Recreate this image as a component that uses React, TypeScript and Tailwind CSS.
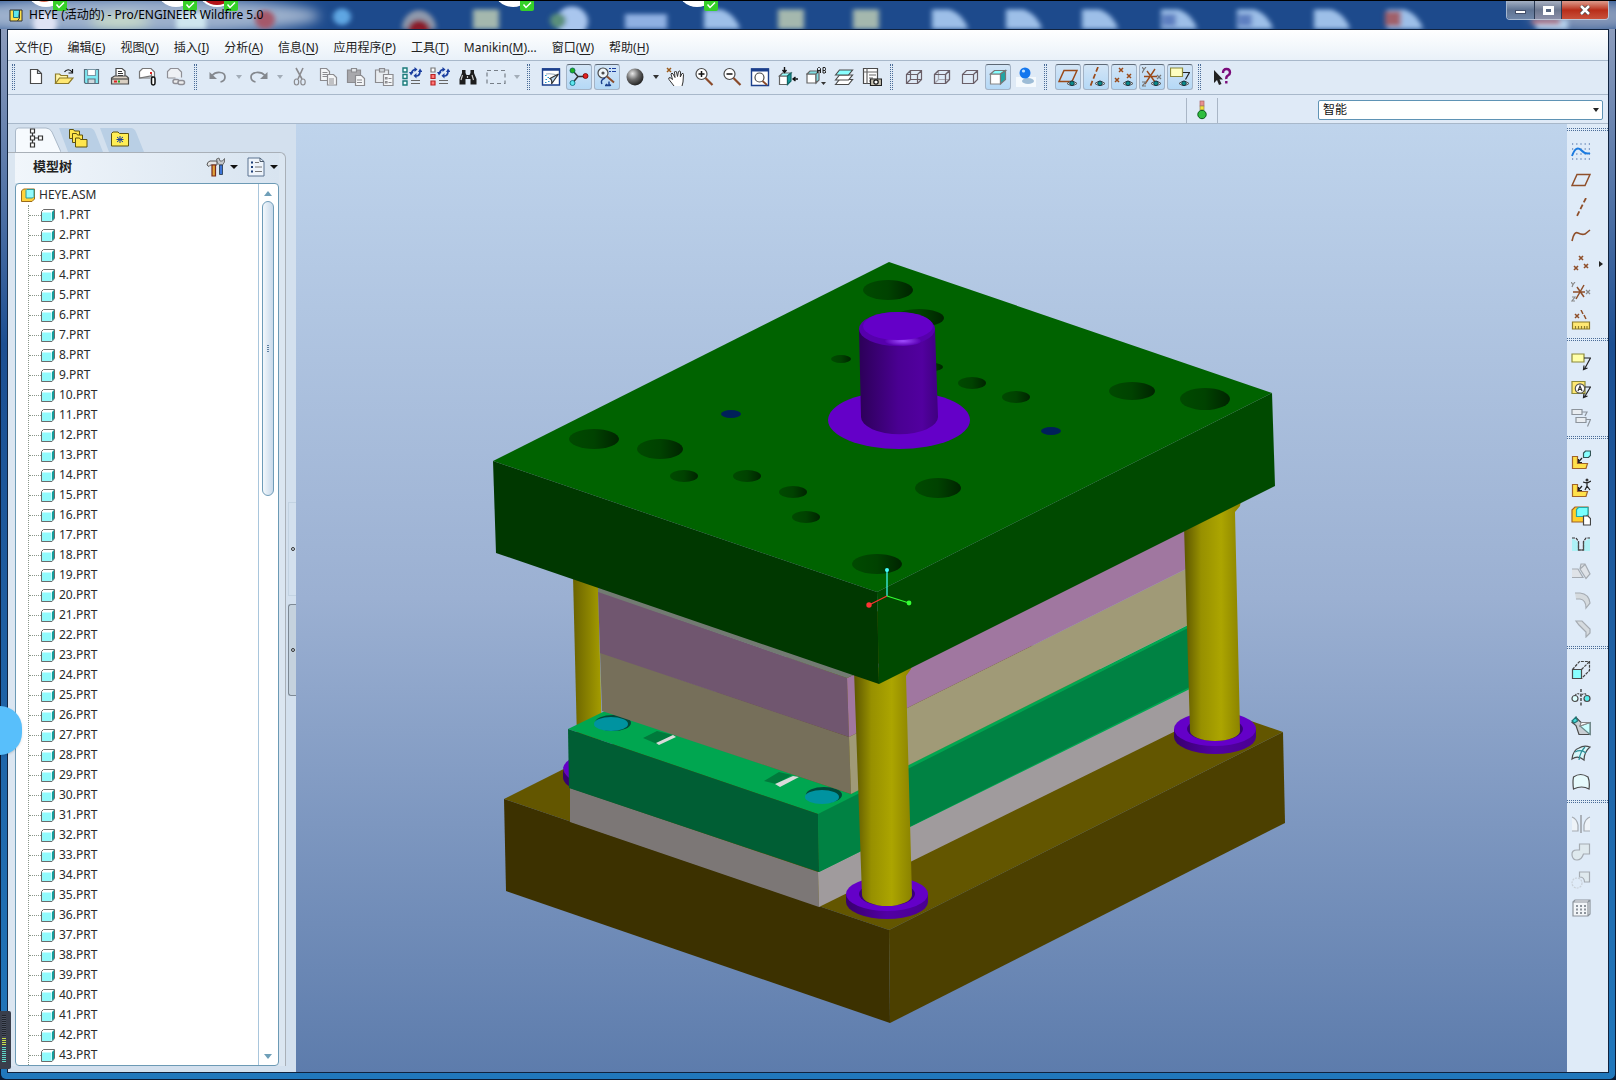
import type { ReactNode } from "react";

interface ToolItem {
  name: string;
  icon?: ReactNode;
  pressed?: boolean;
  disabled?: boolean;
  kind?: "grip" | "arrow";
}

interface MenuEntry {
  label: string;
  hotkey: string;
  tail?: string;
}

const menus: MenuEntry[] = [
  { label: "文件", hotkey: "F" },
  { label: "编辑", hotkey: "E" },
  { label: "视图", hotkey: "V" },
  { label: "插入", hotkey: "I" },
  { label: "分析", hotkey: "A" },
  { label: "信息", hotkey: "N" },
  { label: "应用程序", hotkey: "P" },
  { label: "工具", hotkey: "T" },
  { label: "Manikin", hotkey: "M", tail: "..." },
  { label: "窗口", hotkey: "W" },
  { label: "帮助", hotkey: "H" },
];

const parts = Array.from({ length: 43 }, (_, i) => `${i + 1}.PRT`);

function Icon({ children }: { children: ReactNode }) {
  return (
    <svg viewBox="0 0 20 20" className="size-5 shrink-0" fill="none" stroke="#4a4a4a" strokeWidth="1.2" aria-hidden="true">
      {children}
    </svg>
  );
}

// Small eye that marks the datum display toggles
const eye = (
  <g>
    <path d="M9 16.500q5-4.500 10 0q-5 4-10 0z" fill="#dbe7ee" stroke="#555" strokeWidth="1" />
    <circle cx="14" cy="16.300" r="2.300" fill="#0b8a8a" stroke="#123" strokeWidth="0.8" />
  </g>
);

const leader = <path d="M13 6h6.500l-6 11M13 13.500l-.5 4 4-1.500" stroke="#222" />;

const asmL = <path d="M1.500 6.500h5v7h10l-1.500 5H1.500z" fill="#ffe14a" stroke="#a0632a" />;

const cubeWire = "M2.500 7.500h11v9h-11z M6.500 3.500h11v9h-11z M2.500 7.500l4-4M13.500 7.500l4-4M13.500 16.500l4-4M2.500 16.500l4-4";

const toolbar: ToolItem[] = [
  { name: "g1", kind: "grip" },
  { name: "新建", icon: <Icon><path d="M4.500 2.500h7l4 4v10h-11z M11.500 2.500v4h4" fill="#fff" /></Icon> },
  {
    name: "打开",
    icon: (
      <Icon>
        <path d="M1.500 16.500v-9.500h4l1.500 1.500h6.500v3" fill="#fff6a8" stroke="#8c7a2a" />
        <path d="M1.500 16.500l4-5.500h13.500l-4.500 5.500z" fill="#ffe873" stroke="#8c7a2a" />
        <path d="M10.500 5c2-3 5.500-3 7.500 0M18.500 2v4h-4" stroke="#111" />
      </Icon>
    ),
  },
  {
    name: "保存",
    icon: (
      <Icon>
        <path d="M2.500 2.500h14v14h-13l-1-1z" fill="#7fe9f3" stroke="#5a6e7c" />
        <path d="M5.500 2.500h8v6h-8z" fill="#fff" stroke="#7a98a6" />
        <path d="M6 12h7v4.500H6z" fill="#cfd8dd" stroke="#5a6e7c" />
      </Icon>
    ),
  },
  {
    name: "打印",
    icon: (
      <Icon>
        <path d="M6 10V1.500h6l3 2.500v6" fill="#fff" />
        <path d="M8 4.500h4M8 6.500h5M8 8.500h5" stroke="#333" />
        <path d="M1.500 11l3-2h12l2 2v6h-17z" fill="#d9cfc2" />
        <path d="M1.500 12h17" />
        <path d="M4 14.500h3" stroke="#d22" strokeWidth="2" />
        <path d="M8 14.500h2" stroke="#2a2" strokeWidth="2" />
      </Icon>
    ),
  },
  {
    name: "发送",
    icon: (
      <Icon>
        <path d="M1.500 11V4.500l3-3h8.500l3.500 3.500v6l-3.500-2z" fill="#fff" stroke="#777" />
        <path d="M1.500 11h11M13.500 11V7" stroke="#777" />
        <rect x="13.500" y="10" width="3.500" height="8" rx="1.700" fill="#fff" stroke="#111" strokeWidth="1.500" />
        <path d="M12 6h2" stroke="#d22" strokeWidth="2" />
      </Icon>
    ),
  },
  {
    name: "链接",
    icon: (
      <Icon>
        <g stroke="#8f8f96">
          <path d="M1.500 11V4.500l3-3h7.500l3.500 3.500v5.500M1.500 11h8" fill="#eef1f5" />
          <rect x="7" y="12.500" width="6" height="4" rx="2" fill="#eee" strokeWidth="1.500" />
          <rect x="12" y="13.500" width="6.500" height="4" rx="2" fill="#eee" strokeWidth="1.500" />
        </g>
      </Icon>
    ),
  },
  { name: "g2", kind: "grip" },
  { name: "撤消", icon: <Icon><path d="M4 8.500C8 4 17 4.500 17 10c0 3-2 4.500-4.500 5" stroke="#84888e" strokeWidth="1.700" /><path d="M1.500 5v7H9z" fill="#84888e" stroke="none" /></Icon> },
  { name: "撤消列表", kind: "arrow", disabled: true },
  { name: "重做", icon: <Icon><path d="M16 8.500C12 4 2 4.500 2 10c0 3 2 4.500 4.500 5" stroke="#84888e" strokeWidth="1.700" /><path d="M18.500 5v7H11z" fill="#84888e" stroke="none" /></Icon> },
  { name: "重做列表", kind: "arrow", disabled: true },
  { name: "剪切", icon: <Icon><path d="M6 1l6 11M13 1L8 12" stroke="#8b8b8f" strokeWidth="1.600" /><ellipse cx="6.500" cy="15" rx="2.200" ry="3" stroke="#8b8b8f" /><ellipse cx="13" cy="15" rx="2.200" ry="3" stroke="#8b8b8f" /></Icon> },
  { name: "复制", icon: <Icon><g stroke="#8b8b8f"><path d="M2.500 1.500h6l3 3v9h-9z" fill="#f4f6f8" /><path d="M4.500 5.500h5M4.500 7.500h5M4.500 9.500h5" /><path d="M9.500 7.500h6l3 3v7.500h-9z" fill="#f4f6f8" /><path d="M11 12h5M11 14h5M11 16h5" /></g></Icon> },
  { name: "粘贴", icon: <Icon><g stroke="#8b8b8f"><path d="M1.500 3h13v12.500h-13z" fill="#a8a8ac" /><path d="M5.500 1.500h5V5h-5z" fill="#e4e7ea" /><path d="M9.500 8.500h6l3 3v7h-9z" fill="#f4f6f8" /><path d="M11 13h5M11 15.500h5" /></g></Icon> },
  { name: "选择性粘贴", icon: <Icon><g stroke="#8b8b8f"><path d="M1.500 3h13v12.500h-13z" fill="#e8ecf0" /><path d="M5.500 1.500h5V5h-5z" fill="#cfd4d9" /><path d="M9.500 7.500h9.500v11H9.500z" fill="#f4f6f8" /><path d="M11.500 10.500h1.500v1.500h-1.500zM11.500 14.500h1.500v1.500h-1.500zM14.500 11.500h3M14.500 15.500h3" /></g></Icon> },
  {
    name: "再生",
    icon: (
      <Icon>
        <path d="M1 1h4v4H1zM1 7.500h4v4H1zM1 14h4v4H1z" fill="#eff" stroke="#1a7a7a" strokeWidth="1.400" />
        <path d="M9.500 6q1-3.500 4-3.500M18 4q0 5-4 5" stroke="#1b3fa0" strokeWidth="1.700" />
        <path d="M12.500 0v5l3-2.500zM14.500 6v5.500l-3-2.700zM7 5h4.500L9 8.500zM16 5h4.500L18 1.500z" fill="#1b3fa0" stroke="none" />
        <path d="M9 13.500h9M9 16.500h9" stroke="#666" />
      </Icon>
    ),
  },
  {
    name: "再生管理器",
    icon: (
      <Icon>
        <path d="M1 1h4v4H1z" fill="#fff" stroke="#777" />
        <path d="M1 7.500h4v4H1zM1 14h4v4H1z" fill="#f77" stroke="#b22" />
        <path d="M9.500 6q1-3.500 4-3.500M18 4q0 5-4 5" stroke="#1b3fa0" strokeWidth="1.700" />
        <path d="M12.500 0v5l3-2.500zM14.500 6v5.500l-3-2.700zM7 5h4.500L9 8.500zM16 5h4.500L18 1.500z" fill="#1b3fa0" stroke="none" />
        <path d="M9 13.500h9M9 16.500h9" stroke="#666" />
      </Icon>
    ),
  },
  {
    name: "查找",
    icon: (
      <Icon>
        <path d="M4 3h3.500v3l1 2h3l1-2V3H16v3l2.500 6v5.500h-6V12h-5v5.500h-6V12L4 6z" fill="#1d1d1d" stroke="none" />
        <path d="M4.500 8l-1.500 5M14 8l1.500 5M9.500 9v2" stroke="#c8c8c8" />
      </Icon>
    ),
  },
  { name: "选取框", icon: <Icon><path d="M1 3.500h18v13H1z" stroke="#777f88" strokeDasharray="4 3" /></Icon> },
  { name: "选取列表", kind: "arrow", disabled: true },
  { name: "g3", kind: "grip" },
  {
    name: "重画",
    icon: (
      <Icon>
        <path d="M1.500 2h17v16h-17z" fill="#fff" stroke="#1b3f8c" strokeWidth="1.400" />
        <path d="M1 2.500h18" stroke="#1b3f8c" strokeWidth="2.500" />
        <path d="M5 7q7-1 12 2" stroke="#9ab" />
        <path d="M17.500 7l-7 10q1-4-1.500-5.500z" fill="#bcd9f0" stroke="#333" />
        <path d="M4 8.500h1.500M6.500 10.500h1.500M4.500 12.500h1.500M7 14.500h1.500M4 15.500h1.500" stroke="#29c" />
      </Icon>
    ),
  },
  {
    name: "旋转中心",
    pressed: true,
    icon: (
      <Icon>
        <path d="M4 4l5 5.500-5 6M9 9.500h8" stroke="#333" strokeWidth="1.500" />
        <circle cx="3.500" cy="3.500" r="2.500" fill="#1fae1f" stroke="#065" strokeWidth=".8" />
        <circle cx="16.500" cy="9" r="2.500" fill="#e02020" stroke="#700" strokeWidth=".8" />
        <circle cx="3.500" cy="16" r="2.500" fill="#5fe6ee" stroke="#067" strokeWidth=".8" />
      </Icon>
    ),
  },
  {
    name: "定向模式",
    pressed: true,
    icon: (
      <Icon>
        <circle cx="6" cy="6" r="5" fill="#eef6fa" />
        <circle cx="6" cy="6" r="1" fill="#333" />
        <path d="M10 9.500l7 6" stroke="#8a4a2a" strokeWidth="2" />
        <path d="M12 1.500h2M15 1.500h4M12 4.500h2M15 4.500h4" stroke="#1b3fa0" />
        <path d="M8 11q-5 2-3 6M14 18q-3 1.500-5-1M12 14.500v4H8" stroke="#1b3f8c" strokeWidth="1.400" />
      </Icon>
    ),
  },
  { name: "外观库", icon: <Icon><circle cx="10" cy="10" r="8.500" fill="url(#ball)" stroke="none" /></Icon> },
  { name: "外观列表", kind: "arrow" },
  {
    name: "平移",
    icon: (
      <Icon>
        <path d="M1 1l4 4M5 1L1 5" stroke="#9a5a1a" strokeWidth="1.500" />
        <path d="M8 19L3 12.500q-1-2 1-2l2.500 2L5 7q1-2 2 0l2 3.500L8.500 5q1-2 2 0l1 4.500 1-5q1.500-1.500 2 .5l-.2 5 1.700-3.500q1.500-.5 1.500 1L17 15l-1 4" fill="#fff" stroke="#333" strokeWidth="1" />
      </Icon>
    ),
  },
  { name: "放大", icon: <Icon><circle cx="7.500" cy="7" r="5.500" fill="#fff" /><path d="M4.500 7h6M7.500 4v6" stroke="#111" strokeWidth="1.500" /><path d="M11.500 11l7 7" stroke="#8a4a2a" strokeWidth="2.200" /></Icon> },
  { name: "缩小", icon: <Icon><circle cx="7.500" cy="7" r="5.500" fill="#fff" /><path d="M4.500 7h6" stroke="#111" strokeWidth="1.500" /><path d="M11.500 11l7 7" stroke="#8a4a2a" strokeWidth="2.200" /></Icon> },
  {
    name: "重新调整",
    icon: (
      <Icon>
        <path d="M1.500 2h17v16.500h-17z" fill="#fff" stroke="#1b3f8c" strokeWidth="1.400" />
        <path d="M1 3h18" stroke="#1b3f8c" strokeWidth="3" />
        <circle cx="9.500" cy="10.500" r="4.500" />
        <path d="M12.500 14l4.500 4" stroke="#8a4a2a" strokeWidth="1.800" />
      </Icon>
    ),
  },
  {
    name: "视图方向",
    icon: (
      <Icon>
        <path d="M1.500 9h8v8.500h-8z" fill="#fff" stroke="#666" />
        <path d="M1.500 9l3-3h8.500l-3.500 3z" fill="#9ff" stroke="#666" />
        <path d="M9.500 9L13 6v8l-3.500 3.500z" fill="#159c9c" stroke="#166" />
        <path d="M6.500 0v5M4.500 3l2 2.500 2-2.500M20 12h-4.500M17.500 10L15 12l2.500 2" stroke="#111" strokeWidth="1.400" />
      </Icon>
    ),
  },
  {
    name: "命名视图",
    icon: (
      <Icon>
        <path d="M1 7h9v9H1z" fill="#fff" stroke="#666" />
        <path d="M1 7l3-3h9l-3 3zM10 7l3-3v9l-3 3z" fill="#7fdde2" stroke="#666" />
        <path d="M11.500 6V1.500l1-1h1l1 1V6M11.500 3.500h3M17 .5v5.500h2l1-1-1-1.500 1-1.500-1-1.500z M17 3.500h2" stroke="#222" strokeWidth="1" />
        <path d="M15 15h5l-2.500 3z" fill="#333" stroke="none" />
      </Icon>
    ),
  },
  {
    name: "层",
    icon: (
      <Icon>
        <path d="M1.500 17.500l4-5h13l-4 5z" fill="#fff" />
        <path d="M1.500 13l4-5h13l-4 5z" fill="#fff" />
        <path d="M1.500 8l4-5h13l-4 5z" fill="#8ff" />
      </Icon>
    ),
  },
  {
    name: "视图管理器",
    icon: (
      <Icon>
        <path d="M1.500 1.500h14v15h-14z" fill="#fff" />
        <path d="M1.500 5h14M5 1.500v15M7 8h7M7 11h4M7 14h3" stroke="#666" />
        <path d="M8.500 12h11v6.500h-11z" fill="#c9c4b4" stroke="#222" />
        <circle cx="14" cy="15" r="2.200" fill="#fff" stroke="#111" />
      </Icon>
    ),
  },
  { name: "g4", kind: "grip" },
  { name: "线框", icon: <Icon><path d={cubeWire} stroke="#6a5f68" /></Icon> },
  { name: "隐藏线", icon: <Icon><path d={cubeWire} stroke="#a9a9b2" /><path d="M2.500 7.500h11v9h-11zM2.500 7.500l4-4h11v9l-4 4M13.500 7.500l4-4" stroke="#6a5f68" /></Icon> },
  { name: "消隐", icon: <Icon><path d="M2.500 7.500h11v9h-11zM2.500 7.500l4-4h11v9l-4 4M13.500 7.500l4-4" stroke="#6a5f68" /></Icon> },
  {
    name: "着色",
    pressed: true,
    icon: (
      <Icon>
        <path d="M2.500 7h10v10h-10z" fill="#fff" stroke="#888" />
        <path d="M2.500 7l4-3.500h11l-5 3.500z" fill="#8ff" stroke="#777" />
        <path d="M12.500 7l5-3.500v9l-5 4.500z" fill="#1fa5a5" stroke="#777" />
      </Icon>
    ),
  },
  {
    name: "增强的真实感",
    icon: (
      <Icon>
        <path d="M0 10h20v10H0z" fill="#f4f9fd" stroke="none" />
        <ellipse cx="12" cy="14" rx="6" ry="3" fill="#9dbcd6" stroke="none" />
        <circle cx="9" cy="6" r="5.500" fill="#1477ee" stroke="none" />
        <circle cx="7.500" cy="4" r="1.600" fill="#bfe0ff" stroke="none" />
      </Icon>
    ),
  },
  { name: "g5", kind: "grip" },
  { name: "平面显示", pressed: true, icon: <Icon><path d="M1 14.500l5-11h13l-5 11z" stroke="#9a4a1a" strokeWidth="1.500" />{eye}</Icon> },
  { name: "轴显示", pressed: true, icon: <Icon><path d="M12 0L4 20" stroke="#9a4a1a" strokeWidth="1.700" strokeDasharray="5 2.500" />{eye}</Icon> },
  { name: "点显示", pressed: true, icon: <Icon><path d="M5 1l4 4M9 1L5 5M13 7l4 4M17 7l-4 4M1 11l4 4M5 11l-4 4" stroke="#9a4a1a" strokeWidth="1.500" />{eye}</Icon> },
  {
    name: "坐标系显示",
    pressed: true,
    icon: (
      <Icon>
        <path d="M13 2L3 17M2 9.500h13M5 4l8 11" stroke="#9a4a1a" strokeWidth="1.400" />
        <path d="M0 0l2 2.500L4 0M2 2.500L0 6M0 15h4l-4 4h4M15 8l4 4M19 8l-4 4" stroke="#777" />
        {eye}
      </Icon>
    ),
  },
  { name: "注释显示", pressed: true, icon: <Icon><path d="M.5 1h12v8.500H.5z" fill="#ffffc0" stroke="#8c8a3a" /><path d="M13 5.500h6.500l-4 7" stroke="#222" />{eye}</Icon> },
  { name: "g6", kind: "grip" },
  { name: "上下文帮助", icon: <Icon><path d="M2 3v13l3-3 2 5 2.500-1-2-4.500H11z" fill="#222" stroke="none" /><path d="M11 6q0-4 3.500-4T18 5.500q0 2-2 3t-1.700 3.500M14.300 14v2.500" stroke="#7a0b7a" strokeWidth="2.400" /></Icon> },
];

const brown = "#8f4f2a";

const sideTools: ToolItem[] = [
  { name: "s1", kind: "grip" },
  {
    name: "草绘",
    icon: (
      <Icon>
        <path d="M1 2h18M1 7h18M1 12h18M1 17h18" stroke="#345a9c" strokeDasharray="1.200 3" />
        <path d="M1 14Q5 3 10 8t9 3" stroke="#1b7be0" strokeWidth="1.900" />
      </Icon>
    ),
  },
  { name: "平面", icon: <Icon><path d="M1 15.500l5-11h13l-5 11z" stroke={brown} strokeWidth="1.500" /></Icon> },
  { name: "轴", icon: <Icon><path d="M15 0L5 20" stroke={brown} strokeWidth="1.800" strokeDasharray="5 2.500" /></Icon> },
  { name: "曲线", icon: <Icon><path d="M1 15Q3 5 7 7t7 1l5-4" stroke={brown} strokeWidth="1.600" /></Icon> },
  { name: "点", icon: <Icon><path d="M8 2l4 4M12 2L8 6M13 10l4 4M17 10l-4 4M3 12l4 4M7 12l-4 4" stroke={brown} strokeWidth="1.600" /></Icon> },
  {
    name: "坐标系",
    icon: (
      <Icon>
        <path d="M13 3L5 17M2 10h12M6 5l7 10" stroke={brown} strokeWidth="1.500" />
        <path d="M0 0l2 2.500L4 0M2 2.500L1 5M1 15h3l-3 4h3M15 8l4 4M19 8l-4 4" stroke="#888" />
      </Icon>
    ),
  },
  {
    name: "分析特征",
    icon: (
      <Icon>
        <path d="M4 4l4 4M8 4L4 8M10 0l2 4M13 5l2 4" stroke={brown} strokeWidth="1.500" />
        <path d="M1.500 12h17v7h-17z" fill="#ffe873" stroke="#8c7a2a" />
        <path d="M4.500 19v-3M7.500 19v-3M10.500 19v-3M13.500 19v-3M16 19v-3" stroke="#8c7a2a" />
      </Icon>
    ),
  },
  { name: "s2", kind: "grip" },
  { name: "注释", icon: <Icon><path d="M1 2h12v8H1z" fill="#ffffa8" stroke="#8c8a3a" />{leader}</Icon> },
  { name: "传播", icon: <Icon><path d="M1 1.500h13v12H1z" fill="#ffe873" stroke="#8c8a3a" /><circle cx="9" cy="8.500" r="4.700" fill="#fff" stroke="#555" /><path d="M7 11l2-5 2 5M7.500 9.500h3" stroke="#333" /><path d="M14 7h5.500l-6 10M13 13.500l-.5 4 4-1.500" stroke="#222" /></Icon> },
  { name: "注释组", disabled: true, icon: <Icon><g stroke="#8d949c"><path d="M1 1.500h10v5H1zM5 9.500h10v5H5z" fill="#e9edf1" /><path d="M11 4h5l-2 4M15 11.500h4.500l-3 7" /></g></Icon> },
  { name: "s3", kind: "grip" },
  {
    name: "装配",
    icon: (
      <Icon>
        {asmL}
        <path d="M12.500 7.500V3l2-2h5v4.500l-2 2z" fill="#8ff" stroke="#355" />
        <path d="M11 8l-3.500 4M7.500 9v3.500H11" stroke="#222" />
      </Icon>
    ),
  },
  {
    name: "人体模型",
    icon: (
      <Icon>
        {asmL}
        <circle cx="16" cy="2" r="1.500" fill="#333" stroke="none" />
        <path d="M12 4l4 1 4-2M16 4v4l-2 4M16 8l3 4M11 8l-3.500 4M7.500 9v3.500H11" stroke="#222" />
      </Icon>
    ),
  },
  {
    name: "创建",
    icon: (
      <Icon>
        <path d="M1 4l3-3h13V13l-3 3H1z" fill="#ffcf2a" stroke="#a0632a" />
        <path d="M5.500 3.500l2-2H17v7l-2 2H5.500z" fill="#7ff" stroke="#2aa" />
        <path d="M12.500 10h4.500l2.500 2.500v6.500h-7z" fill="#fff" stroke="#444" />
      </Icon>
    ),
  },
  { name: "孔", icon: <Icon><path d="M1 4l6 4v9H1zM19 4l-6 4v9h6z" fill="#aef1f6" stroke="none" /><path d="M1 4h4l2.500 3.500v8.500h5V7.500L15 4h4" stroke="#333" strokeDasharray="3 1" /><path d="M7.500 7.500v8.500h5V7.500" /></Icon> },
  { name: "壳", disabled: true, icon: <Icon><g stroke="#a5abb2"><path d="M1 7h6l5 8.500H1M10 2h4l5 10-4 4.500L9 7zM9 7l5-4.500" fill="#dfe3e8" /></g></Icon> },
  { name: "倒圆角", disabled: true, icon: <Icon><g stroke="#a5abb2"><path d="M4 3h5q9 1 10 10l-4 5q0-8-6-9H5" fill="#d5dade" /></g></Icon> },
  { name: "倒角", disabled: true, icon: <Icon><g stroke="#a5abb2"><path d="M5 3h6l8 8v4l-4 4v-5L8 7z" fill="#d5dade" /></g></Icon> },
  { name: "s4", kind: "grip" },
  { name: "拉伸", icon: <Icon><path d="M1.500 9.500h9v9h-9z" fill="#8ff" /><path d="M1.500 9.500l7-8h10v9l-8 8M10.500 9.500l8-8" stroke="#444" strokeDasharray="3 1" /></Icon> },
  { name: "旋转", icon: <Icon><circle cx="4" cy="10.500" r="3" fill="#dff" /><circle cx="16" cy="10.500" r="3" fill="#5ee" /><path d="M10 1v18" stroke="#222" strokeDasharray="3 1.500" /><path d="M4 7.500q3-4 6 .5q3-4.500 6-.5" strokeDasharray="2 1" /></Icon> },
  { name: "扫描", icon: <Icon><path d="M5 1.500l5 5h9v12h-11l-3-9-4-3z" fill="#c9ced3" /><path d="M9 10l10-3.500v12z" fill="#cff" stroke="#688" /><path d="M10 6.500h9L9 10z" fill="#fff" stroke="#888" /><path d="M1 5l4-4 1.500 4-3 2z" fill="#4dd" stroke="#277" /></Icon> },
  { name: "边界混合", icon: <Icon><path d="M1 15q1-9 7-11q5-3 11-1-6 5-6 13-6-5-12-1z" fill="#d9f7fa" /><path d="M4 8q6-3 11 1M8 16q1-8 6-13" stroke="#2a8f98" /></Icon> },
  { name: "造型", icon: <Icon><path d="M2.500 17q-1-7 0-12 7-5 14.500 0 2 5 1 12-7-4-15.500 0z" fill="#e6fafc" /></Icon> },
  { name: "s5", kind: "grip" },
  { name: "镜像", disabled: true, icon: <Icon><g stroke="#a5abb2"><path d="M10 1v18" strokeWidth="1.800" /><path d="M1 3q5 2 6 8v6H1M19 3q-5 2-6 8v6h6" fill="#eef3f8" /></g></Icon> },
  { name: "合并", disabled: true, icon: <Icon><g stroke="#a5abb2"><path d="M8.500 2h10v10h-6q-2 6-6.500 6T1 13t5-5h2.500z" fill="#dfe9ee" /></g></Icon> },
  { name: "修剪", disabled: true, icon: <Icon><g stroke="#a5abb2"><path d="M8.500 2h10v10h-5q0-5-5-5z" fill="#dfe9ee" /><circle cx="6" cy="13" r="5" stroke="#c9d0d8" strokeDasharray="2 1" /></g></Icon> },
  { name: "阵列", disabled: true, icon: <Icon><g stroke="#8d949c"><path d="M2 4l2-2h15v14l-2 2H2zM2 4h15v14M17 4l2-2" fill="#f2f5f8" /><path d="M5 8h10M5 11.500h10M5 15h10" strokeDasharray="2 2" strokeWidth="1.800" /></g></Icon> },
];

function Grip({ vertical }: { vertical?: boolean }) {
  if (vertical) {
    return (
      <div className="h-[14px] w-full pt-1">
        <div className="h-[3px] border-y border-dotted border-[#4a6c98]" />
      </div>
    );
  }
  return (
    <div className="h-[26px] w-[14px] shrink-0 pl-1">
      <div className="h-full w-[3px] border-x border-dotted border-[#4a6c98]" />
    </div>
  );
}

function Toolbar() {
  return (
    <div className="flex h-[34px] items-center border-b border-[#a8b8ca] bg-[#dfeaf6] pb-0.5">
      {toolbar.map((item) => {
        if (item.kind === "grip") return <Grip key={item.name} />;
        if (item.kind === "arrow") {
          return (
            <button key={item.name} aria-label={item.name} className="flex h-[26px] w-[13px] items-center justify-center">
              <span className={`border-x-[3px] border-t-4 border-x-transparent ${item.disabled ? "border-t-[#a3adb8]" : "border-t-[#333]"}`} />
            </button>
          );
        }
        return (
          <button
            key={item.name}
            aria-label={item.name}
            className={`mx-px flex h-[26px] w-[26px] shrink-0 items-center justify-center rounded-[3px] border ${
              item.pressed ? "border-[#a3b3c6] border-t-[#5d6875] bg-linear-to-b from-[#d3e5f6] to-[#b4d8f6]" : "border-transparent"
            }`}
          >
            {item.icon}
          </button>
        );
      })}
    </div>
  );
}

function Tick({ className }: { className: string }) {
  return (
    <svg viewBox="0 0 14 10" className={`absolute top-0 h-[10px] w-[14px] ${className}`} aria-hidden="true">
      <path d="M0 0h14v8q0 2-2 2H2q-2 0-2-2z" fill="#35d028" />
      <path d="M3.500 3.500L6 6.500l5-5" fill="none" stroke="#fff" strokeWidth="1.500" />
    </svg>
  );
}

// Desktop icons showing through the glass title bar
function GlassBackdrop() {
  const docs = [707, 935, 1009, 1085, 1164, 1240, 1317, 1390];
  const sheets = [780, 855, 475];
  return (
    <svg viewBox="0 0 1616 30" preserveAspectRatio="none" className="absolute inset-0 h-full w-full" aria-hidden="true">
      <defs>
        <filter id="soft" x="-20%" y="-50%" width="140%" height="200%">
          <feGaussianBlur stdDeviation="2.500" />
        </filter>
        <filter id="softer" x="-20%" y="-100%" width="140%" height="300%">
          <feGaussianBlur stdDeviation="6" />
        </filter>
      </defs>
      <rect width="1616" height="30" fill="#1d4a8c" />
      <g filter="url(#softer)">
        <ellipse cx="130" cy="16" rx="190" ry="20" fill="#9cb0cc" />
        <ellipse cx="1590" cy="16" rx="60" ry="16" fill="#8497b8" />
        <ellipse cx="120" cy="22" rx="30" ry="8" fill="#c9dcc9" />
      </g>
      <g filter="url(#soft)">
        <circle cx="45" cy="24" r="12" fill="#dfe3f4" />
        <rect x="176" y="12" width="30" height="18" fill="#cfe6ef" />
        <circle cx="265" cy="20" r="10" fill="#a5596b" />
        <circle cx="342" cy="17" r="9" fill="#5fa6e2" />
        <path d="M402 30a17 20 0 0 1 34 0z" fill="#8e99ac" />
        <circle cx="419" cy="31" r="11" fill="#8a1f2b" />
        <circle cx="572" cy="22" r="16" fill="#a9c6ee" />
        <circle cx="558" cy="21" r="8" fill="#5a8f7c" />
        <rect x="625" y="14" width="42" height="16" fill="#8fb0e2" />
        {docs.map((x) => (
          <path key={x} d={`M${x - 3} 9h18q14 6 18 21h-36z`} fill="#9dbfe8" />
        ))}
        {sheets.map((x) => (
          <path key={x} d={`M${x - 2} 9h26v21h-26z`} fill="#a4b8ae" />
        ))}
        <rect x="1162" y="14" width="14" height="13" fill="#5d7fc0" />
        <rect x="1238" y="14" width="14" height="13" fill="#5d7fc0" />
        <rect x="1385" y="11" width="16" height="16" fill="#a0606a" />
        <path d="M1536 20h32v10h-32z" fill="#b4d0ec" />
        <path d="M1532 20h28v5h-28z" fill="#b07080" />
      </g>
    </svg>
  );
}

function TitleBar() {
  return (
    <header className="relative flex h-[29px] shrink-0 items-start justify-between overflow-hidden border-t border-black">
      <GlassBackdrop />
      <svg viewBox="0 0 1616 10" preserveAspectRatio="xMinYMin slice" className="absolute inset-x-0 top-0 h-[10px] w-full" aria-hidden="true">
        <circle cx="46" cy="-14" r="20" fill="#fff" />
        <circle cx="44" cy="-12" r="13" fill="#e06a50" />
        <circle cx="176" cy="-14" r="20" fill="#fff" />
        <circle cx="217" cy="-14" r="20" fill="#fff" />
        <circle cx="217" cy="-14" r="18" fill="#b21218" />
        <circle cx="513" cy="-14" r="20" fill="#fff" />
        <circle cx="697" cy="-14" r="20" fill="#fff" />
      </svg>
      <Tick className="left-[53px]" />
      <Tick className="left-[183px]" />
      <Tick className="left-[224px]" />
      <Tick className="left-[520px]" />
      <Tick className="left-[704px]" />
      <div className="relative flex h-7 items-center gap-1.5 pl-[9px]">
        <svg viewBox="0 0 14 14" className="size-3.5" aria-hidden="true">
          <path d="M1 2h12v11H1z" fill="#ffe14a" stroke="#333" />
          <path d="M4.500 2.500h6l-1 7h-5z" fill="#5fe6ee" stroke="#277" />
          <path d="M10.500 2v8l-2 3" fill="none" stroke="#333" />
        </svg>
        <h1 className="text-xs text-black">HEYE (活动的) - Pro/ENGINEER Wildfire 5.0</h1>
      </div>
      <div className="relative mr-[7px] flex h-[19px] overflow-hidden rounded-b-[4px] border border-t-0 border-[#c9d3e0]/80">
        <button aria-label="最小化" className="flex w-7 items-center justify-center border-r border-[#2b3b55] bg-linear-to-b from-[#a3b0c4] via-[#5f7392] to-[#6f86a8]">
          <span className="mt-1 h-1 w-[11px] border border-[#44506a] bg-white" />
        </button>
        <button aria-label="最大化" className="flex w-[27px] items-center justify-center border-r border-[#2b3b55] bg-linear-to-b from-[#a9b2c3] via-[#6d7890] to-[#8b8fa8]">
          <span className="h-[9px] w-[11px] border-[3px] border-white bg-[#56657f]" />
        </button>
        <button aria-label="关闭" className="flex w-[46px] items-center justify-center bg-linear-to-b from-[#dc9a8c] via-[#b82c18] to-[#c8503a]">
          <svg viewBox="0 0 12 10" className="h-[10px] w-3" aria-hidden="true">
            <path d="M2 1l8 8M10 1L2 9" stroke="#444" strokeWidth="4" />
            <path d="M2 1l8 8M10 1L2 9" stroke="#fff" strokeWidth="2.500" />
          </svg>
        </button>
      </div>
    </header>
  );
}

function MenuBar() {
  return (
    <nav className="flex h-[31px] items-center gap-[15px] border-b border-[#a8b8ca] bg-linear-to-b from-white to-[#e9f1f9] pl-[7px] pt-1.5">
      {menus.map((menu) => (
        <button key={menu.label} className="whitespace-nowrap text-xs text-[#222]">
          {menu.label}(<u className="underline-offset-2">{menu.hotkey}</u>){menu.tail}
        </button>
      ))}
    </nav>
  );
}

function FilterBar() {
  return (
    <div className="flex h-[29px] items-center justify-end border-b border-[#a8b8ca] bg-[#dfeaf7] pr-[5px] pt-0.5">
      <div className="mr-[100px] flex h-[25px] w-8 items-center justify-center border-x border-[#a9b6c6]">
        <svg viewBox="0 0 10 20" className="h-5 w-[10px]" aria-hidden="true">
          <rect x="3" y="1" width="4" height="5" fill="#e89090" stroke="#a66" strokeWidth=".7" />
          <rect x="3" y="6" width="4" height="4" fill="#f2e23a" stroke="#985" strokeWidth=".7" />
          <circle cx="5" cy="14.500" r="4.200" fill="#2fbe3f" stroke="#0b5a1b" />
        </svg>
      </div>
      <div className="relative">
        <select aria-label="选取过滤器" className="block h-5 w-[285px] appearance-none rounded-[2px] border border-[#5f93b5] bg-white pl-1 text-xs leading-4 text-[#111]">
          <option>智能</option>
        </select>
        <span className="pointer-events-none absolute right-1 top-2 border-x-[3px] border-t-4 border-x-transparent border-t-[#222]" />
      </div>
    </div>
  );
}

function PartIcon() {
  return (
    <svg viewBox="0 0 14 14" className="size-3.5 shrink-0" aria-hidden="true">
      <path d="M.5 3.500l2-2h11v9l-2.500 3H.5z" fill="#fff" stroke="#6b6b6b" />
      <path d="M1 4.500h9.500V13H1z" fill="#92fbfd" />
      <path d="M11 4l2-2v8.500L11 12.800z" fill="#149c9c" />
    </svg>
  );
}

const tabClass = "relative flex h-[25px] items-start justify-center pt-px";

function ModelTree() {
  return (
    <aside className="flex w-[280px] shrink-0 flex-col pb-1.5">
      <div className="flex items-end pl-[7px] pt-[3px]" role="tablist">
        <button role="tab" aria-selected="true" aria-label="模型树" className={`${tabClass} w-[42px]`}>
          <svg viewBox="0 0 46 25" className="absolute left-0 top-0 h-[25px] w-[46px]" aria-hidden="true">
            <path d="M.5 25V4q0-3 3-3H31q4 0 6 4l9 20" fill="#f6fafe" stroke="#aab9c9" />
          </svg>
          <svg viewBox="0 0 20 20" className="relative size-5" fill="#fff" stroke="#333" strokeWidth="1.200" aria-hidden="true">
            <path d="M4.500 1h4v4h-4zM4.500 8h4v4h-4zM12.500 8h4v4h-4zM4.500 15h4v4h-4zM6.500 5v3M6.500 12v3M8.500 10h4" />
          </svg>
        </button>
        <button role="tab" aria-selected="false" aria-label="文件夹浏览器" className={`${tabClass} w-[42px]`}>
          <svg viewBox="0 0 46 25" className="absolute left-0 top-0 h-[25px] w-[46px]" aria-hidden="true">
            <path d="M2 1h31q3 0 5 4l8 20H11z" fill="#b9cfe5" />
          </svg>
          <svg viewBox="0 0 20 20" className="relative size-5" fill="#ffe64d" stroke="#5e5310" aria-hidden="true">
            <path d="M1.500 1.500h4l1 1.500h5v7.500h-10z" />
            <path d="M4.500 5.500h4l1 1.500h5v7.500h-10z" />
            <path d="M7.500 10h4l1 1.500h6.500v7.500H7.500z" />
          </svg>
        </button>
        <button role="tab" aria-selected="false" aria-label="收藏夹" className={`${tabClass} w-[42px]`}>
          <svg viewBox="0 0 46 25" className="absolute left-0 top-0 h-[25px] w-[46px]" aria-hidden="true">
            <path d="M1 1h31q3 0 5 4l8 20H10z" fill="#b9cfe5" />
          </svg>
          <svg viewBox="0 0 20 20" className="relative size-5" aria-hidden="true">
            <path d="M1.500 18V5.500L3 4h5l1.500 1.500h9V18z" fill="#ffee55" stroke="#5e5310" />
            <path d="M10 8v7M7 9l6 5M13 9l-6 5M6.500 11.500h7" stroke="#1b3fa0" />
          </svg>
        </button>
      </div>
      <div className="mr-0.5 flex min-h-0 flex-1 flex-col rounded-tr-[6px] border-r border-t border-[#a9b0b8] bg-[#dbe6f1] pl-[7px] pr-1.5">
        <div className="flex h-[30px] shrink-0 items-center bg-linear-to-r from-[#f1f6fb] to-[#d8e4f0] pb-0.5 pl-[18px] pr-px">
          <h2 className="flex-1 text-[13px] font-bold text-[#222]">模型树</h2>
          <button aria-label="设置" className="flex items-center gap-1">
            <svg viewBox="0 0 20 20" className="size-5" aria-hidden="true">
              <path d="M1 8q0-3 3-4h7v4H4.500L3 9.500z" fill="#e4e4e4" stroke="#555" />
              <path d="M6 8h3.500v11H6z" fill="#e0a23a" stroke="#7a2a1a" strokeWidth="1.200" />
              <path d="M10.500 2l1 4 2 2h3l2-3V1.500l-2 2.500h-2.500L13 1z" fill="#c4c8cc" stroke="#555" strokeWidth=".8" />
              <path d="M13.500 8h3v9.500h-3z" fill="#3d74d8" stroke="#234" strokeWidth=".8" />
            </svg>
            <span className="border-x-4 border-t-4 border-x-transparent border-t-[#111]" />
          </button>
          <button aria-label="显示" className="ml-2 flex items-center gap-1">
            <svg viewBox="0 0 20 20" className="size-5" aria-hidden="true">
              <path d="M2 1h12l4 3.500V19H2z" fill="#eef4fb" stroke="#5a7390" />
              <path d="M14 1v3.500h4" fill="none" stroke="#4d5a6b" />
              <path d="M5 5.500h2M5 10h2M5 14.500h2" stroke="#1c3e78" strokeWidth="1.800" />
              <path d="M9 5.500h4M9 10h7M9 14.500h7" stroke="#777" />
            </svg>
            <span className="border-x-4 border-t-4 border-x-transparent border-t-[#111]" />
          </button>
        </div>
        <div className="flex min-h-0 flex-1 overflow-hidden rounded-[4px] border border-[#6c9ab5] bg-white">
          <div className="min-w-0 flex-1 pt-px text-xs text-[#2b2b2b]">
            <div className="flex h-5 items-center gap-1 pl-[5px]">
              <svg viewBox="0 0 14 14" className="size-3.5 shrink-0" aria-hidden="true">
                <path d="M.5 3l2-2h11v10l-2.500 2.500H.5z" fill="#ffd23a" stroke="#9a6a1a" />
                <path d="M5 2.500l1-1h7v7l-1.500 1.500H5z" fill="#92fbfd" stroke="#2a9a9a" />
              </svg>
              HEYE.ASM
            </div>
            <ul className="ml-3 border-l border-dotted border-[#8a968a]">
              {parts.map((part) => (
                <li key={part} className="flex h-5 items-center">
                  <span className="w-3 border-t border-dotted border-[#8a968a]" />
                  <PartIcon />
                  <span className="ml-1">{part}</span>
                </li>
              ))}
            </ul>
          </div>
          <div className="flex w-5 shrink-0 flex-col items-center justify-between border-l border-[#a9c6dc] pb-1.5 pr-px pt-[7px]">
            <span className="border-x-4 border-b-[5px] border-x-transparent border-b-[#6f9fb8]" />
            <div className="mb-auto mt-[5px] flex h-[295px] w-3 flex-col items-center justify-center gap-px rounded-full border border-[#6f9cb8] bg-linear-to-r from-[#f3f8fc] to-[#c8d9ea]">
              <span className="h-px w-0.5 bg-[#5d7fa0]" />
              <span className="h-px w-0.5 bg-[#5d7fa0]" />
              <span className="h-px w-0.5 bg-[#5d7fa0]" />
              <span className="h-px w-0.5 bg-[#5d7fa0]" />
            </div>
            <span className="border-x-4 border-t-[5px] border-x-transparent border-t-[#6f9fb8]" />
          </div>
        </div>
      </div>
    </aside>
  );
}

function Splitter() {
  return (
    <div className="flex w-2 shrink-0 flex-col items-end justify-center gap-2 pt-0.5">
      <button aria-label="折叠" className="flex h-[94px] w-2 items-center justify-center border border-r-0 border-[#c3d3e2]">
        <span className="size-1 rounded-full border border-[#333]" />
      </button>
      <button aria-label="展开" className="flex h-[92px] w-2 items-center justify-center rounded-l-[3px] border border-r-0 border-[#7d8995] bg-[#c5d2de]">
        <span className="size-1 rounded-full border border-[#333]" />
      </button>
    </div>
  );
}

const holes = [
  [888, 290, 25, 10],
  [919, 318, 25, 9],
  [841, 359, 10, 4],
  [933, 367, 10, 4],
  [972, 383, 14, 6],
  [1016, 397, 14, 6],
  [1132, 391, 23, 9],
  [1205, 399, 25, 11],
  [594, 439, 25, 10],
  [660, 449, 23, 10],
  [684, 476, 14, 6],
  [747, 476, 14, 6],
  [793, 492, 14, 6],
  [806, 517, 14, 6],
  [938, 488, 23, 10],
  [877, 564, 25, 10],
];

function Collar({ cx, cy }: { cx: number; cy: number }) {
  return (
    <g>
      <path d={`M${cx - 41} ${cy}v8a41 17 0 0 0 82 0v-8z`} fill="url(#collarSide)" />
      <ellipse cx={cx} cy={cy} rx="41" ry="17" fill="#6400c8" />
      <ellipse cx={cx} cy={cy} rx="28" ry="12" fill="#3a0078" />
    </g>
  );
}

function Viewport() {
  return (
    <main className="min-w-0 flex-1 bg-linear-to-b from-[#bfd4ec] via-[#9bb0d2] to-[#5d7cac]">
      <svg viewBox="296 124 1271 948" className="h-full w-full" role="img" aria-label="HEYE.ASM">
        <defs>
          <radialGradient id="ball" cx="0.35" cy="0.3" r="0.75">
            <stop offset="0" stopColor="#e8e8e8" />
            <stop offset="0.5" stopColor="#6a6a6a" />
            <stop offset="1" stopColor="#1c1c1c" />
          </radialGradient>
          <linearGradient id="hole">
            <stop offset="0" stopColor="#004a00" />
            <stop offset="0.5" stopColor="#004200" />
            <stop offset="1" stopColor="#002400" />
          </linearGradient>
          <linearGradient id="pillar">
            <stop offset="0" stopColor="#5c5600" />
            <stop offset="0.3" stopColor="#979000" />
            <stop offset="0.65" stopColor="#aca500" />
            <stop offset="1" stopColor="#8a8200" />
          </linearGradient>
          <linearGradient id="pillarBack">
            <stop offset="0" stopColor="#6a6300" />
            <stop offset="1" stopColor="#a69e00" />
          </linearGradient>
          <linearGradient id="sprue">
            <stop offset="0" stopColor="#2c0058" />
            <stop offset="0.5" stopColor="#4a0092" />
            <stop offset="0.8" stopColor="#52009f" />
            <stop offset="1" stopColor="#3f0080" />
          </linearGradient>
          <linearGradient id="collarSide">
            <stop offset="0" stopColor="#38006e" />
            <stop offset="0.5" stopColor="#5200a4" />
            <stop offset="1" stopColor="#4a0090" />
          </linearGradient>
          <radialGradient id="glint">
            <stop offset="0" stopColor="#a04cff" />
            <stop offset="1" stopColor="#5a00b4" />
          </radialGradient>
        </defs>

        {/* bottom clamp plate */}
        <path d="M504 799L900 600L1283 732L889 930z" fill="#635600" />
        <path d="M504 799L889 930L890 1023L506 891z" fill="#3c3100" />
        <path d="M889 930L1283 732L1285 823L890 1023z" fill="#4c4000" />
        <path d="M563 768a41 17 0 0 0 20 15v9a41 17 0 0 1-20-15z" fill="#38006e" />
        <path d="M563 768q2-8 14-12v26q-12-4-14-14z" fill="#6400c8" />

        {/* back guide pillar, seen left of the stack */}
        <path d="M573 576L598 584L602 740L577 740z" fill="url(#pillarBack)" />

        {/* spacer plate */}
        <path d="M570 788L818 872L819 907L570 822z" fill="#7c7776" />
        <path d="M818 872L1200 682L1200 719L819 907z" fill="#a09b9d" />

        {/* green core plate */}
        <path d="M568 729L605 711L851 794L858 790L1200 619L1200 684L819 872L818 814z" fill="#00a650" />
        <path d="M568 729L818 814L819 872L569 788z" fill="#005e34" />
        <path d="M818 814L1200 622L1200 682L819 872z" fill="#008243" />
        <ellipse cx="613" cy="723" rx="18" ry="8" fill="#004a3a" />
        <ellipse cx="611" cy="724" rx="17" ry="7" fill="#0093a0" />
        <ellipse cx="824" cy="795" rx="18" ry="8" fill="#004a3a" />
        <ellipse cx="822" cy="797" rx="17" ry="7" fill="#0093a0" />
        <path d="M643 738L657 731L673 735L657 744z" fill="#007a3c" />
        <path d="M656 743L673 735L676 737L659 745z" fill="#dadada" />
        <path d="M764 781L779 772L792 775L776 784z" fill="#007a3c" />
        <path d="M775 784L793 776L799 777L780 787z" fill="#dadada" />

        {/* cavity plates */}
        <path d="M600 652L849 737L851 794L602 711z" fill="#766f5a" />
        <path d="M849 737L1190 567L1190 624L851 794z" fill="#a09a77" />
        <path d="M598 591L847 678L849 737L600 653z" fill="#70566f" />
        <path d="M847 678L1190 520L1190 567L849 737z" fill="#a077a0" />
        <path d="M598 584L860 672L847 678L598 592z" fill="#727b72" />

        <Collar cx={1215} cy={729} />
        <path d="M1184 526L1241 500L1240 506L1235 512L1240 731a25 10 0 0 1-50 0z" fill="url(#pillar)" />
        <Collar cx={887} cy={894} />
        <path d="M854 670L912 664L911 669L906 676L912 895a25 11 0 0 1-50 0z" fill="url(#pillar)" />

        {/* top clamp plate */}
        <path d="M889 262L1272 393L877 592L493 461z" fill="#006300" />
        <path d="M493 461L877 592L879 684L496 553z" fill="#003800" />
        <path d="M877 592L1272 393L1275 486L879 684z" fill="#004a00" />
        {holes.map(([cx, cy, rx, ry]) => (
          <ellipse key={`${cx}-${cy}`} cx={cx} cy={cy} rx={rx} ry={ry} fill="url(#hole)" />
        ))}
        <ellipse cx="731" cy="414" rx="10" ry="4" fill="#00205a" />
        <ellipse cx="1051" cy="431" rx="10" ry="4" fill="#00205a" />

        {/* locating ring and sprue bushing */}
        <ellipse cx="899" cy="420" rx="71" ry="29" fill="#6400c8" />
        <path d="M859 329L861 417a38 17 0 0 0 77 0L935 329z" fill="url(#sprue)" />
        <ellipse cx="897" cy="329" rx="38" ry="17" fill="#5600ac" />
        <ellipse cx="903" cy="341" rx="18" ry="5" fill="url(#glint)" />
        <ellipse cx="898" cy="326" rx="35" ry="14" fill="#6400c8" />

        {/* spin centre */}
        <path d="M887 596V570" stroke="#4ff" strokeWidth="1.200" />
        <path d="M887 596L869 605" stroke="#f33" strokeWidth="1.200" />
        <path d="M887 596L909 603" stroke="#3f3" strokeWidth="1.200" />
        <circle cx="887" cy="570" r="2" fill="#4ff" />
        <circle cx="869" cy="605" r="2.700" fill="#f33" />
        <circle cx="909" cy="603" r="2.400" fill="#3f3" />
      </svg>
    </main>
  );
}

function SideBar() {
  return (
    <div className="flex w-[41px] shrink-0 flex-col bg-[#dfebf8]">
      {sideTools.map((item) =>
        item.kind === "grip" ? (
          <Grip key={item.name} vertical />
        ) : (
          <button key={item.name} aria-label={item.name} disabled={item.disabled} className="flex h-7 items-center gap-2 pl-1">
            {item.icon}
            {item.name === "点" && <span className="border-y-[3px] border-l-4 border-y-transparent border-l-[#222]" />}
          </button>
        )
      )}
    </div>
  );
}

// Desktop gadgets docked to the left screen edge
function EdgeGadgets() {
  return (
    <>
      <div className="absolute left-0 top-[706px] h-[49px] w-[22px] rounded-r-full bg-[#58bffb] shadow" />
      <div className="absolute bottom-[11px] left-0 flex h-[58px] w-[11px] flex-col justify-end gap-px rounded-r-[2px] bg-[#3a3f4c] pb-1.5 pl-0.5">
        <span className="h-[22px] w-1 bg-[repeating-linear-gradient(#20242c_0_1px,#4a5160_1px_2px)]" />
        <span className="h-[8px] w-1 bg-[repeating-linear-gradient(#c8e04a_0_1px,#3a3f4c_1px_2px)]" />
        <span className="h-[16px] w-1 bg-[repeating-linear-gradient(#5fd8c8_0_1px,#3a3f4c_1px_2px)]" />
      </div>
    </>
  );
}

export default function App() {
  return (
    <div className="relative flex h-screen flex-col overflow-hidden bg-[#0b1a33] font-['Noto_Sans','Noto_Sans_CJK_SC',sans-serif]">
      <TitleBar />
      <div className="flex min-h-0 flex-1 flex-col rounded-b-md border-x border-b border-[#0b1a33] bg-linear-to-b from-[#8c9cbc] from-0% via-[#1c4f92] via-30% to-[#2178bc] pb-1.5 pl-[6px] pr-[6px]">
        <div className="flex min-h-0 flex-1 flex-col border border-[#10233f] bg-[#d3e0ee]">
          <MenuBar />
          <Toolbar />
          <FilterBar />
          <div className="flex min-h-0 flex-1">
            <ModelTree />
            <Splitter />
            <Viewport />
            <SideBar />
          </div>
        </div>
      </div>
      <EdgeGadgets />
    </div>
  );
}
